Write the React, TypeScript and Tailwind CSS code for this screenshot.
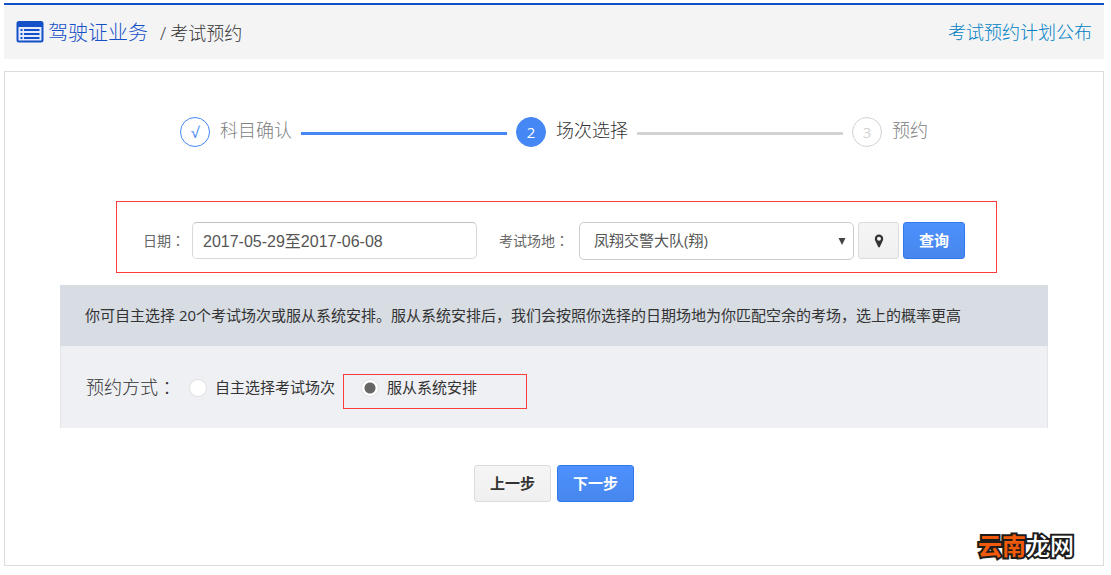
import { useState } from 'react';
import type { ReactNode } from 'react';

const btn = 'h-[37px] shrink-0 rounded-[3px] border text-[15px] font-bold';
const plain = 'border-[#dcdcdc] bg-linear-to-b from-[#f5f5f5] to-[#f0f0f0] text-[#333]';
const primary = 'border-[#3079ed] bg-linear-to-b from-[#4d90fe] to-[#4787ed] text-white';

function LicenceIcon() {
  return (
    <svg viewBox="0 0 28 22" className="h-[22px] w-7 shrink-0" aria-hidden>
      <rect x="1.500" y="1" width="25" height="19.500" rx="1.500" fill="#e4ebfa" stroke="#1450c8" strokeWidth="2" />
      <path d="M1 1h26v5H1z" fill="#1450c8" />
      <path d="M8 9h15.500M8 13h15.500M8 17h15.500" stroke="#1450c8" strokeWidth="2" />
      <path d="M4.500 9h2M4.500 13h2M4.500 17h2" stroke="#1450c8" strokeWidth="2" />
    </svg>
  );
}

function PinIcon() {
  return (
    <svg viewBox="0 0 10 14" className="h-[14px] w-[10px]" aria-hidden>
      <path d="M5 .5a4.2 4.2 0 0 0-4.2 4.2c0 1 .2 1.600.6 2.400L4.200 13c.3.600 1.300.600 1.600 0l2.800-5.900c.4-.8.6-1.400.6-2.400A4.200 4.200 0 0 0 5 .5Zm0 6.200a2 2 0 1 1 0-4 2 2 0 0 1 0 4Z" fill="#333" />
    </svg>
  );
}

/* full-width colon, set in the middle of its square */
function Colon() {
  return <span lang="zh-TW" className="font-['Noto_Sans_CJK_TC',sans-serif]">：</span>;
}

function Step({ mark, circle, text, children }: { mark: string; circle: string; text: string; children: ReactNode }) {
  return (
    <li className={`flex shrink-0 items-center gap-[10px] text-[18px] leading-[26px] ${text}`}>
      <span className={`flex size-[30px] items-center justify-center rounded-full border font-['Open_Sans','Noto_Sans_CJK_SC',sans-serif] text-[15px] font-normal ${circle}`}>
        {mark}
      </span>
      <span className="pb-1">{children}</span>
    </li>
  );
}

function Radio({ value, current, onPick, children }: { value: string; current: string; onPick: (v: string) => void; children: ReactNode }) {
  return (
    <>
      <input
        type="radio"
        name="mode"
        value={value}
        checked={current === value}
        onChange={() => onPick(value)}
        className="size-[18px] shrink-0 appearance-none rounded-full border border-[#e0e0e3] bg-white checked:bg-[radial-gradient(circle,#666_5px,#fff_6px)]"
      />
      {children}
    </>
  );
}

export default function App() {
  const [dates, setDates] = useState('2017-05-29至2017-06-08');
  const [mode, setMode] = useState('auto');

  return (
    <div lang="zh-CN" className="bg-white pt-[3px] pr-[7px] pb-2 pl-1 font-['Open_Sans','Noto_Sans_CJK_SC',sans-serif] text-[15px] text-[#333]">
      <header className="flex h-14 items-center justify-between border-t-2 border-[#1450c8] bg-[#f4f4f4] px-3">
        <h1 className="flex items-center text-[18px] font-light text-[#333]">
          <LicenceIcon />
          <span className="mt-[2px] ml-1 text-[20px] text-[#1450c8]">驾驶证业务</span>
          <span className="mt-[2px] ml-3">/</span>
          <span className="mt-[2px] ml-1">考试预约</span>
        </h1>
        <a href="#plan" className="text-[18px] font-light text-[#007fc4]">考试预约计划公布</a>
      </header>

      <main className="relative mt-3 border border-[#dcdcdc] px-[55px] pt-[45px] pb-[63px]">
        <ol className="mx-auto flex w-full max-w-[748px] items-center gap-[9px] font-light">
          <Step mark="√" circle="border-[#4587f5] text-[#4587f5]" text="text-[#808080]">科目确认</Step>
          <li aria-hidden className="mt-[2px] h-[3px] flex-1 bg-[#4587f5]" />
          <Step mark="2" circle="border-[#4587f5] bg-[#4587f5] text-white" text="text-[#333]">场次选择</Step>
          <li aria-hidden className="mt-[2px] h-[3px] flex-1 bg-[#d2d2d2]" />
          <Step mark="3" circle="border-[#d2d2d2] text-[#d2d2d2]" text="text-[#808080]">预约</Step>
        </ol>

        <form className="mt-[54px] mr-[51px] ml-14 flex h-[72px] items-center border border-[#fa3c3c] pt-[7px] pr-[31px] pl-[26px] text-[14px] text-[#666]" onSubmit={(e) => e.preventDefault()}>
          <label htmlFor="dates" className="w-[49px] shrink-0">日期<Colon /></label>
          <input
            id="dates"
            value={dates}
            onChange={(e) => setDates(e.target.value)}
            className="h-[37px] w-[285px] min-w-0 rounded-[5px] border border-[#d9d9d9] border-t-[#c0c0c0] px-[10px] pb-[2px] font-['Liberation_Sans','Noto_Sans_CJK_SC',sans-serif] text-[16px] text-[#555]"
          />
          <label htmlFor="site" className="ml-[22px] w-20 shrink-0">考试场地<Colon /></label>
          <div className="relative min-w-0 flex-1">
            <select id="site" className="block h-[38px] w-full appearance-none rounded-[5px] border border-[#ccc] bg-white px-[14px] text-[15px] text-[#555]">
              <option>凤翔交警大队(翔)</option>
            </select>
            <svg viewBox="0 0 8 7" className="pointer-events-none absolute top-4 right-2 h-[7px] w-2" aria-hidden>
              <path d="M.5 0h7L4 7Z" fill="#444" />
            </svg>
          </div>
          <button type="button" aria-label="地图" className={`${btn} ${plain} ml-1 flex w-[41px] items-center justify-center`}>
            <PinIcon />
          </button>
          <button type="submit" className={`${btn} ${primary} ml-1 w-[62px]`}>查询</button>
        </form>

        <section className="mt-3">
          <p className="bg-[#d8dde4] px-[25px] py-[18px] leading-[25px]">
            你可自主选择 20个考试场次或服从系统安排。服从系统安排后，我们会按照你选择的日期场地为你匹配空余的考场，选上的概率更高
          </p>
          <fieldset className="flex h-[82px] items-start border-x border-[#e3e4e8] bg-[#eff0f4] pt-7 pl-[25px]">
            <span className="flex h-[26px] w-[103px] items-center text-[18px] font-light">预约方式<Colon /></span>
            <label className="flex h-[27px] items-center gap-2">
              <Radio value="self" current={mode} onPick={setMode}>自主选择考试场次</Radio>
            </label>
            <label className="ml-2 flex h-[35px] w-[184px] items-center gap-2 border border-[#fa3c3c] pb-2 pl-[17px]">
              <Radio value="auto" current={mode} onPick={setMode}>服从系统安排</Radio>
            </label>
          </fieldset>
        </section>

        <div className="mt-[37px] flex justify-center gap-[6px]">
          <button type="button" className={`${btn} ${plain} w-[77px]`}>上一步</button>
          <button type="button" className={`${btn} ${primary} w-[77px]`}>下一步</button>
        </div>

        <div className="absolute right-[29px] bottom-[5px] text-[24px] leading-[28px] font-medium text-white [-webkit-text-stroke:4px_#1c1c1c] [paint-order:stroke_fill]">
          <span className="font-bold text-[#f05a0a]">云南</span>龙网
        </div>
      </main>
    </div>
  );
}
